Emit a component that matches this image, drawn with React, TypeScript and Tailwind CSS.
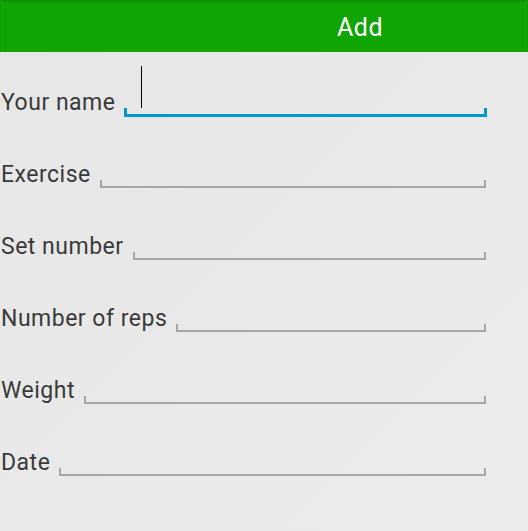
import React from "react";

const rows = [
  { label: "Your name", active: true },
  { label: "Exercise" },
  { label: "Set number" },
  { label: "Number of reps" },
  { label: "Weight" },
  { label: "Date" },
];

export default function App() {
  return (
    <div
      className="w-[528px] h-[531px] overflow-hidden bg-gradient-to-br from-[#e6e6e6] via-[#e9e9e9] to-[#ececec]"
      style={{ fontFamily: "Roboto, 'Noto Sans', sans-serif" }}
    >
      <div className="h-[52px] bg-[#11a503] flex items-center shadow-[inset_0_2px_2px_rgba(0,0,0,0.12)]">
        <span className="ml-[337px] mt-[2px] text-white text-[25px] tracking-[0.5px] leading-none">Add</span>
      </div>
      <div className="flex flex-col">
        {rows.map((r) => (
          <div key={r.label} className="relative h-[72px] flex items-end pb-[7px] pr-[41px]">
            <span className="pl-[1px] text-[23px] tracking-[0.5px] leading-none text-[#3a3a3a] mb-[3px] whitespace-nowrap">
              {r.label}
            </span>
            {r.active ? (
              <div className="relative ml-[9px] flex-1 h-[9px] border-x-[3px] border-b-[3px] border-t-0 border-[#0099cc]">
                <div className="absolute left-[14px] bottom-[6px] w-[1px] h-[42px] bg-black" />
              </div>
            ) : (
              <div className="ml-[9px] mr-[1px] flex-1 h-[8px] border-x-2 border-b-2 border-t-0 border-[#a6a6a6] mb-[1px]" />
            )}
          </div>
        ))}
      </div>
    </div>
  );
}
